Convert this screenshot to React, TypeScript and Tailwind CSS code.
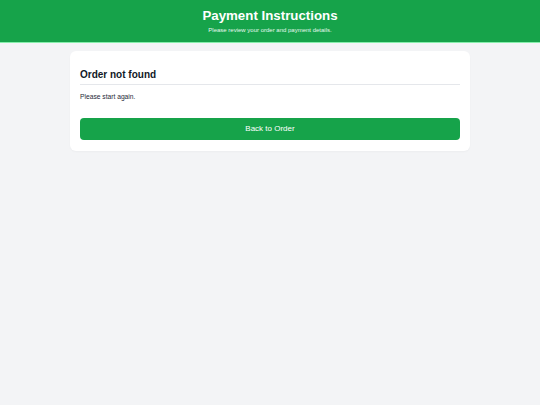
export default function App() {
  return (
    <div className="min-h-[405px] bg-[#f3f4f6] font-['Liberation_Sans',Arial,sans-serif]">
      <header className="flex h-[43px] flex-col items-center justify-center border-b-[1.5px] border-[#86efac] bg-[#16a34a] text-white">
        <h1 className="text-[13.3px] font-bold leading-[16px]">Payment Instructions</h1>
        <p className="mt-[2px] text-[6px] leading-[8px] text-[#e6f7ec]">Please review your order and payment details.</p>
      </header>
      <main className="flex justify-center pt-[8px]">
        <div className="w-[400px] rounded-[6px] bg-white px-[10px] pb-[11px] pt-[17px] shadow-[0_1px_2px_rgba(0,0,0,0.03)]">
          <h2 className="border-b border-[#e5e7eb] pb-[2px] text-[10px] font-bold leading-[14px] text-[#111827]">
            Order not found
          </h2>
          <p className="mt-[7px] text-[6.7px] leading-[9px] text-[#1f2937]">Please start again.</p>
          <button className="mt-[17px] h-[22px] w-full rounded-[4px] bg-[#16a34a] text-[8px] text-white">
            Back to Order
          </button>
        </div>
      </main>
    </div>
  );
}
